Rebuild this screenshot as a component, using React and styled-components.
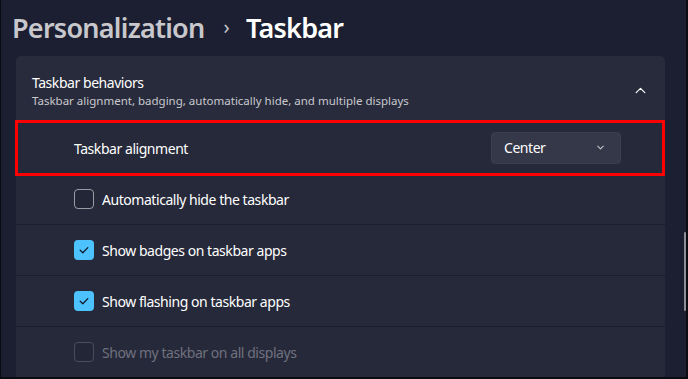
import React from "react";
import styled, { createGlobalStyle } from "styled-components";

const Global = createGlobalStyle`
  html, body { margin: 0; padding: 0; background: #1c1f31; }
  body { font-family: "Noto Sans", "Open Sans", sans-serif; }
`;

const Page = styled.div`
  box-sizing: border-box;
  width: 688px;
  height: 379px;
  overflow: hidden;
  position: relative;
  background: #1c1f31;
  border-left: 1px solid #0b0c12;
  border-right: 2px solid #0b0c12;
  border-bottom: 2px solid #0b0c12;
  display: flex;
  flex-direction: column;
`;

const Breadcrumb = styled.h1`
  margin: 0;
  height: 58px;
  display: flex;
  align-items: center;
  padding: 0 0 2px 11px;
  box-sizing: border-box;
  font-size: 27px;
  font-weight: 600;
  letter-spacing: -0.75px;
`;

const Crumb = styled.span`
  color: ${(p) => (p.$current ? "#ffffff" : "#c8c8cc")};
`;

const Sep = styled.span`
  color: #c8c8cc;
  font-size: 20px;
  font-weight: 400;
  margin: 0 17px 0 19px;
  transform: translateY(-1px);
`;

const Card = styled.section`
  margin-left: 15px;
  width: 649px;
  display: flex;
  flex-direction: column;
  gap: 1px;
  background: #1b1e2c;
  border-radius: 5px 5px 0 0;
`;

const Header = styled.div`
  height: 66px;
  display: flex;
  align-items: center;
  justify-content: space-between;
  padding: 0 18px 0 16px;
  background: #282b3c;
  border-radius: 5px 5px 0 0;
`;

const HeaderText = styled.div`
  display: flex;
  flex-direction: column;
  gap: 1px;
  margin-top: 3px;
`;

const Title = styled.div`
  color: #ffffff;
  font-size: 14px;
  letter-spacing: -0.45px;
  line-height: 19px;
`;

const Subtitle = styled.div`
  color: #c9c9ce;
  font-size: 11.5px;
  line-height: 16px;
`;

const ChevronWrap = styled.span`
  display: inline-flex;
  margin-top: 2px;
`;

const Row = styled.div`
  height: 50px;
  display: flex;
  align-items: center;
  justify-content: space-between;
  padding: 0 44px 0 58px;
  background: #262939;
  position: relative;
  ${(p) =>
    p.$highlight &&
    `
    z-index: 1;
    &::after {
      content: "";
      position: absolute;
      top: -3px;
      bottom: -3px;
      left: -1px;
      right: 0;
      border: 3px solid #ff0000;
      pointer-events: none;
    }
  `}
`;

const RowLabel = styled.label`
  display: flex;
  align-items: center;
  gap: 8px;
  font-size: 14px;
  letter-spacing: -0.45px;
  color: ${(p) => (p.$disabled ? "#6f717e" : "#ffffff")};
`;

const Box = styled.span`
  box-sizing: border-box;
  width: 20px;
  height: 20px;
  border-radius: 4px;
  display: inline-flex;
  align-items: center;
  justify-content: center;
  background: ${(p) => (p.$checked ? "#4cc2ff" : "#232636")};
  border: ${(p) =>
    p.$checked ? "none" : p.$disabled ? "1px solid #4b4e5c" : "1px solid #9a9ba3"};
`;

const Dropdown = styled.button`
  box-sizing: border-box;
  width: 130px;
  height: 32px;
  border-radius: 4px;
  border: 1px solid #3b3e4e;
  background: #353848;
  color: #ffffff;
  font-family: inherit;
  font-size: 14px;
  letter-spacing: -0.45px;
  display: flex;
  align-items: center;
  justify-content: space-between;
  padding: 0 14px 0 12px;
  margin-top: -1px;
`;

const Scrollbar = styled.div`
  position: absolute;
  right: 0;
  top: 232px;
  width: 2px;
  height: 79px;
  background: #8e8f96;
  border-radius: 1px;
`;

const Check = () => (
  <svg width="12" height="12" viewBox="0 0 12 12">
    <path d="M2.2 6.3 L4.8 8.8 L9.8 3.6" fill="none" stroke="#12192a" strokeWidth="1.3" strokeLinecap="round" strokeLinejoin="round" />
  </svg>
);

const Chevron = ({ up, size = 12, color = "#ffffff" }) => (
  <svg width={size} height={size} viewBox="0 0 12 12">
    <path
      d={up ? "M2 8 L6 4 L10 8" : "M3 4.5 L6 7.5 L9 4.5"}
      fill="none"
      stroke={color}
      strokeWidth="1.1"
      strokeLinecap="round"
      strokeLinejoin="round"
    />
  </svg>
);

const CheckRow = ({ label, checked, disabled }) => (
  <Row>
    <RowLabel $disabled={disabled}>
      <Box $checked={checked} $disabled={disabled}>{checked && <Check />}</Box>
      {label}
    </RowLabel>
  </Row>
);

export default function App() {
  return (
    <Page>
      <Global />
      <Breadcrumb>
        <Crumb>Personalization</Crumb>
        <Sep>›</Sep>
        <Crumb $current>Taskbar</Crumb>
      </Breadcrumb>
      <Card>
        <Header>
          <HeaderText>
            <Title>Taskbar behaviors</Title>
            <Subtitle>Taskbar alignment, badging, automatically hide, and multiple displays</Subtitle>
          </HeaderText>
          <ChevronWrap>
            <Chevron up size={13} />
          </ChevronWrap>
        </Header>
        <Row $highlight>
          <RowLabel>Taskbar alignment</RowLabel>
          <Dropdown>
            Center
            <Chevron size={11} color="#c8c8cc" />
          </Dropdown>
        </Row>
        <CheckRow label="Automatically hide the taskbar" />
        <CheckRow label="Show badges on taskbar apps" checked />
        <CheckRow label="Show flashing on taskbar apps" checked />
        <CheckRow label="Show my taskbar on all displays" disabled />
      </Card>
      <Scrollbar />
    </Page>
  );
}
